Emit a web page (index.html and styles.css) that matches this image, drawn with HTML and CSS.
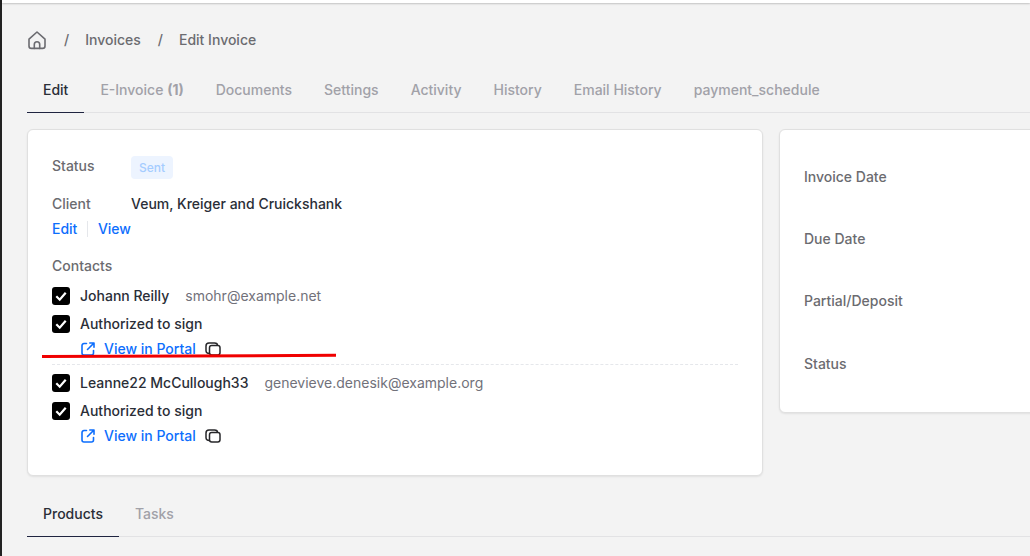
FILE: index.html
```html
<!DOCTYPE html>
<html lang="en">
<head>
<meta charset="utf-8">
<title>Edit Invoice</title>
<link rel="stylesheet" href="styles.css">
</head>
<body>
<div class="app">
  <div class="rail"></div>
  <main class="main">
    <div class="topbar"></div>
    <div class="content">
      <nav class="crumbs">
        <svg class="home" viewBox="0 0 20 20" width="20" height="20" fill="none" stroke="currentColor" stroke-width="1.6" stroke-linejoin="round" stroke-linecap="round"><path d="M2 9.200 10 2l8 7.200V16a2.400 2.400 0 0 1-2.400 2.400H4.400A2.400 2.400 0 0 1 2 16Z"/><path d="M7.300 18.400v-4a2.700 2.700 0 0 1 5.400 0v4"/></svg>
        <span class="sep">/</span><span class="crumb">Invoices</span><span class="sep">/</span><span class="crumb">Edit Invoice</span>
      </nav>
      <div class="tabs tabs-top">
        <a class="tab active">Edit</a>
        <a class="tab">E-Invoice <b>(1)</b></a>
        <a class="tab">Documents</a>
        <a class="tab">Settings</a>
        <a class="tab">Activity</a>
        <a class="tab">History</a>
        <a class="tab">Email History</a>
        <a class="tab">payment_schedule</a>
      </div>
      <div class="cards">
        <section class="card card-main">
          <div class="row status-row"><span class="label">Status</span><span class="badge">Sent</span></div>
          <div class="row client-row"><span class="label">Client</span><span class="client">Veum, Kreiger and Cruickshank</span></div>
          <div class="client-links"><a>Edit</a><i></i><a>View</a></div>
          <div class="contacts-title">Contacts</div>
          <div class="contact">
            <div class="check-row"><span class="check"><svg viewBox="0 0 18 18" width="18" height="18"><path d="M4.300 9.300 7.700 12.700 13.700 5.700" fill="none" stroke="#fff" stroke-width="2.200"/></svg></span><span class="name">Johann Reilly</span><span class="email">smohr@example.net</span></div>
            <div class="check-row"><span class="check"><svg viewBox="0 0 18 18" width="18" height="18"><path d="M4.300 9.300 7.700 12.700 13.700 5.700" fill="none" stroke="#fff" stroke-width="2.200"/></svg></span><span class="name">Authorized to sign</span></div>
            <div class="portal">
              <svg class="ext" viewBox="0 0 16 16" width="16" height="16" fill="none" stroke="currentColor" stroke-width="1.600" stroke-linecap="round" stroke-linejoin="round"><path d="M6.500 2.500H4a2 2 0 0 0-2 2V12a2 2 0 0 0 2 2h7.500a2 2 0 0 0 2-2V9.500"/><path d="M7.500 8.500 14 2M9.800 2H14v4.200"/></svg>
              <a>View in Portal</a>
              <svg class="copy" viewBox="0 0 16 16" width="16" height="16" fill="none" stroke="#27272a" stroke-width="1.500" stroke-linejoin="round"><rect x="4.500" y="4.500" width="10.500" height="9.500" rx="2.200"/><path d="M4.500 12.500C2.500 12.500 1 11.500 1 9.500V5C1 3 2.500 2 4 2h5.500C11.500 2 12.500 3 12.500 4.500"/></svg>
            </div>
          </div>
          <div class="contact contact-next">
            <div class="check-row"><span class="check"><svg viewBox="0 0 18 18" width="18" height="18"><path d="M4.300 9.300 7.700 12.700 13.700 5.700" fill="none" stroke="#fff" stroke-width="2.200"/></svg></span><span class="name">Leanne22 McCullough33</span><span class="email">genevieve.denesik@example.org</span></div>
            <div class="check-row"><span class="check"><svg viewBox="0 0 18 18" width="18" height="18"><path d="M4.300 9.300 7.700 12.700 13.700 5.700" fill="none" stroke="#fff" stroke-width="2.200"/></svg></span><span class="name">Authorized to sign</span></div>
            <div class="portal">
              <svg class="ext" viewBox="0 0 16 16" width="16" height="16" fill="none" stroke="currentColor" stroke-width="1.600" stroke-linecap="round" stroke-linejoin="round"><path d="M6.500 2.500H4a2 2 0 0 0-2 2V12a2 2 0 0 0 2 2h7.500a2 2 0 0 0 2-2V9.500"/><path d="M7.500 8.500 14 2M9.800 2H14v4.200"/></svg>
              <a>View in Portal</a>
              <svg class="copy" viewBox="0 0 16 16" width="16" height="16" fill="none" stroke="#27272a" stroke-width="1.500" stroke-linejoin="round"><rect x="4.500" y="4.500" width="10.500" height="9.500" rx="2.200"/><path d="M4.500 12.500C2.500 12.500 1 11.500 1 9.500V5C1 3 2.500 2 4 2h5.500C11.500 2 12.500 3 12.500 4.500"/></svg>
            </div>
          </div>
        </section>
        <section class="card card-side">
          <div class="side-row">Invoice Date</div>
          <div class="side-row">Due Date</div>
          <div class="side-row">Partial/Deposit</div>
          <div class="side-row">Status</div>
        </section>
      </div>
      <div class="tabs tabs-bottom">
        <a class="tab active">Products</a>
        <a class="tab">Tasks</a>
      </div>
    </div>
  </main>
</div>
<svg class="annotation" width="300" height="8" viewBox="0 0 300 8"><path d="M0 6.500 294 5.300" stroke="#f00000" stroke-width="3" fill="none"/></svg>
</body>
</html>
```
FILE: styles.css
```css
* { box-sizing: border-box; }
html, body { margin: 0; height: 100%; overflow: hidden; }
body { font-family: Inter, "Liberation Sans", sans-serif; font-size: 14px; line-height: 20px; color: #2a2e37; background: #f3f3f3; }
a { cursor: pointer; }
.app { display: flex; height: 556px; }
.rail { width: 2px; flex: none; background: #222; }
.main { flex: 1; min-width: 0; }
.topbar { height: 3px; background: #fff; box-shadow: 0 1px 2px rgba(0,0,0,.2); }
.content { padding: 0 0 0 25px; }
.crumbs { display: flex; align-items: center; height: 20px; margin-top: 27px; color: #6b6b70; font-weight: 500; }
.home { margin-right: 17px; color: #6b6b70; flex: none; }
.sep { margin-right: 16px; }
.crumb { margin-right: 17px; }
.tabs { display: flex; gap: 0; border-bottom: 1px solid #e2e2e4; }
.tabs-top { margin-top: 22px; height: 41px; }
.tab { display: block; padding: 0 16px; height: 41px; line-height: 36px; color: #a1a1a8; font-weight: 500; }
.tab b { font-weight: 700; }
.tab.active { color: #2a2e37; border-bottom: 1px solid #1f2440; }
.cards { display: flex; gap: 16px; margin-top: 16px; align-items: flex-start; }
.card { background: #fff; border: 1px solid #e0e0e0; border-radius: 6px; box-shadow: 0 1px 2px rgba(0,0,0,.08); flex: none; }
.card-main { width: 736px; height: 347px; padding: 26px 24px 0; }
.card-side { width: 400px; height: 284px; padding: 16px 24px 0; }
.row { display: flex; align-items: center; }
.label { width: 79px; color: #6b6b70; flex: none; font-weight: 500; }
.status-row { height: 23px; align-items: flex-start; }
.badge { display: inline-block; height: 23px; padding: 0 8px; line-height: 23px; font-size: 12px; font-weight: 500; color: #a6cdff; background: #edf4ff; border-radius: 4px; }
.client-row { margin-top: 15px; }
.client { font-weight: 500; }
.client-links { display: flex; align-items: center; margin-top: 5px; color: #0d6efd; font-weight: 500; }
.client-links a { color: #0d6efd; }
.client-links i { width: 1px; height: 16px; margin: 0 9.500px 0 10px; background: #e5e7eb; }
.contacts-title { margin-top: 17px; color: #6b6b70; font-weight: 500; }
.contact { margin-top: 10px; }
.check-row { display: flex; align-items: center; height: 20px; margin-bottom: 8px; }
.check { width: 18px; height: 18px; flex: none; border-radius: 3px; background: #000; display: block; margin-right: 10px; }
.check svg { display: block; }
.name { font-weight: 500; }
.email { margin-left: 16px; color: #71717a; font-weight: 400; }
.portal { display: flex; align-items: center; height: 20px; margin-top: -3px; padding-left: 28px; color: #0d6efd; }
.portal a { color: #0d6efd; font-weight: 500; margin-left: 8px; }
.ext { flex: none; }
.copy { flex: none; margin-left: 9px; }
.contact-next { border-top: 1px dashed #e5e7eb; margin-top: 5px; padding-top: 8px; }
.side-row { height: 62.200px; display: flex; align-items: center; color: #6b6b70; font-weight: 500; }
.tabs-bottom { margin-top: 16px; height: 45px; }
.tabs-bottom .tab { height: 45px; line-height: 44px; }
.annotation { position: absolute; left: 42px; top: 350px; }
```
